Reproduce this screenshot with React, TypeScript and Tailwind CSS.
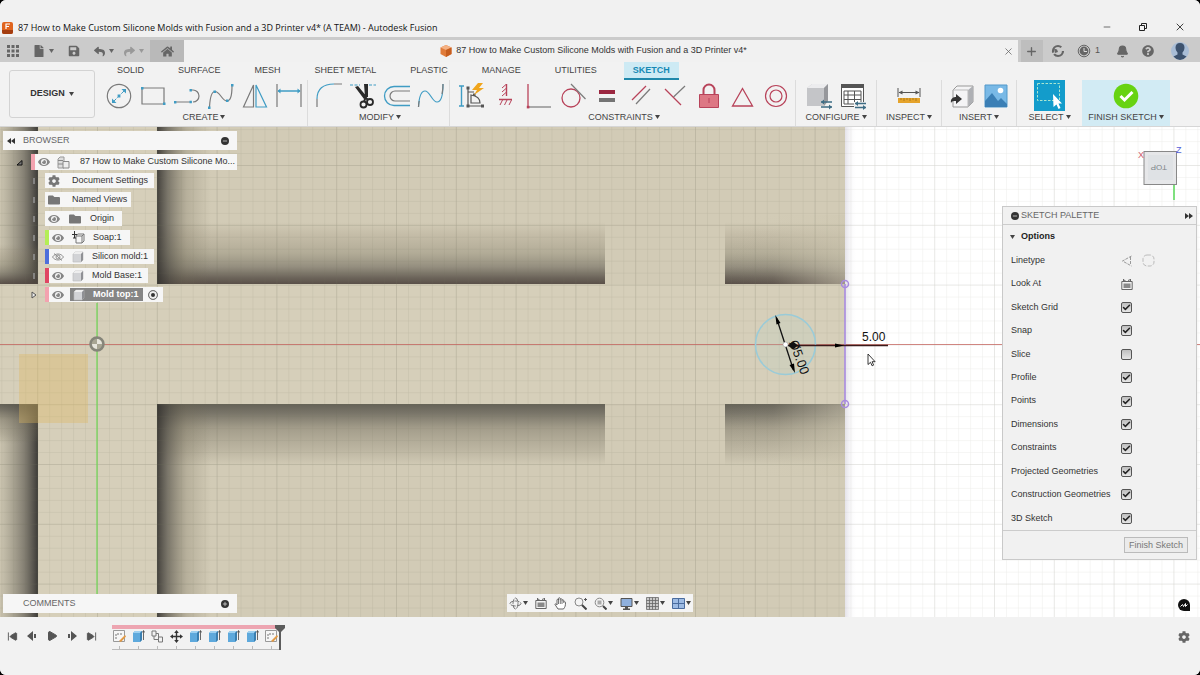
import { ReactNode } from 'react';
import { Bell, Check, Minus, Plus, Play, SkipBack, SkipForward, X } from 'lucide-react';
import { FaCog, FaFolder, FaHome, FaQuestionCircle, FaSave, FaEye, FaFile, FaReply, FaShare } from 'react-icons/fa';

const BLUE = '#3f9cc4';
const RED = '#b8435a';
const GREY = '#7a7a7a';

interface SvgProps {
  size?: number;
  children: ReactNode;
}

function Svg({ size = 28, children }: SvgProps) {
  return (
    <svg width={size} height={size} viewBox={`0 0 ${size} ${size}`} fill="none" className="flex-shrink-0" aria-hidden="true">
      {children}
    </svg>
  );
}

function Caret({ className = 'text-[#444]' }: { className?: string }) {
  return (
    <svg width="5" height="4" viewBox="0 0 5 4" className={`flex-shrink-0 ${className}`} aria-hidden="true">
      <path d="M0 0h5L2.500 4z" fill="currentColor" />
    </svg>
  );
}

/* ---------- ribbon icons ---------- */

const createIcons = [
  {
    label: 'Circle',
    icon: (
      <Svg>
        <circle cx="14" cy="14" r="11.700" stroke={GREY} strokeWidth="1.200" />
        <path d="M8.500 19.500 19.500 8.500" stroke={BLUE} strokeDasharray="4 1.500" />
        <path d="M7 21v-4.500l4.500 4.500zM21 7v4.500L16.500 7zM12.600 12.600h2.800v2.800h-2.800z" fill={BLUE} />
      </Svg>
    ),
  },
  {
    label: 'Rectangle',
    icon: (
      <Svg>
        <path d="M3 6h22v16H3z" stroke={GREY} strokeWidth="1.200" />
        <path d="M2 5h2.500v2.500H2zM24 20.500h2.500V23H24z" fill={BLUE} />
      </Svg>
    ),
  },
  {
    label: 'Line',
    icon: (
      <Svg>
        <path d="M2 20h16M18 8h2a6 6 0 0 1 0 12" stroke={GREY} strokeWidth="1.200" />
        <path d="M1 19h2.400v2.400H1zM16.500 18.800h2.400v2.400h-2.400zM16.500 7h2.400v2.400h-2.400z" fill={BLUE} />
      </Svg>
    ),
  },
  {
    label: 'Spline',
    icon: (
      <Svg>
        <path d="M2.500 25C3 16 4 9.500 8 9.500c5 0 7 9.500 12 9.500 4 0 5-7 5-15" stroke={GREY} strokeWidth="1.200" />
        <path d="M1 24.500h2.500V27H1zM6.500 8.500H9V11H6.500zM19 17.500h2.500V20H19zM24 2h2.500v2.500H24z" fill={BLUE} />
      </Svg>
    ),
  },
  {
    label: 'Mirror',
    icon: (
      <Svg>
        <path d="M12.500 3v22H2.500z" stroke={GREY} strokeWidth="1.200" />
        <path d="M15 3v22h10.500z" stroke={BLUE} strokeWidth="1.200" />
      </Svg>
    ),
  },
  {
    label: 'Sketch Dimension',
    icon: (
      <Svg>
        <path d="M2 2v23M26 2v23" stroke={GREY} strokeWidth="1.200" />
        <path d="M3 9h22" stroke={BLUE} strokeWidth="1.500" />
        <path d="m2.500 9 3-2.500v5zM25.500 9l-3-2.500v5z" fill={BLUE} />
      </Svg>
    ),
  },
];

const modifyIcons = [
  {
    label: 'Fillet',
    icon: (
      <Svg>
        <path d="M2 25v-8M19 2h8" stroke={GREY} strokeWidth="1.200" />
        <path d="M2 17C2 7 8 2 19 2" stroke={BLUE} strokeWidth="1.200" />
      </Svg>
    ),
  },
  {
    label: 'Trim',
    icon: (
      <Svg>
        <path d="M1 3h10M20 3h7" stroke={BLUE} strokeDasharray="3 1.500" />
        <path d="M15 2h4v13h-3zM6 5l3-1 9 11-3 2z" fill="#2a2a2a" />
        <circle cx="14.500" cy="22.500" r="3" stroke="#2a2a2a" strokeWidth="1.800" />
        <circle cx="21" cy="20" r="3" stroke="#2a2a2a" strokeWidth="1.800" />
        <path d="m17 14-2 6M16 15l3 3" stroke="#2a2a2a" strokeWidth="2" />
      </Svg>
    ),
  },
  {
    label: 'Offset',
    icon: (
      <Svg>
        <path d="M27 4.500H11a9.500 9.500 0 0 0 0 19h16" stroke={BLUE} strokeWidth="1.300" />
        <path d="M27 9H12a5 5 0 0 0 0 10h15" stroke={GREY} strokeWidth="1.200" />
      </Svg>
    ),
  },
  {
    label: 'Curve',
    icon: (
      <Svg>
        <path d="M1.500 25C2 16 4 9 8 9c5 0 7 11 12 11 4 0 6-6 6-18" stroke={BLUE} strokeWidth="1.200" />
        <path d="M1.500 25c.1-2 .3-4 .7-6M25 12c.7-3 1-6 1-10" stroke={GREY} strokeWidth="1.200" />
      </Svg>
    ),
  },
];

const constraintIcons = [
  {
    label: 'Auto Dimension',
    icon: (
      <Svg>
        <path d="M2 4h5M2 24h5M4.500 4v20" stroke={BLUE} strokeWidth="1.400" />
        <path d="M11 6v18h15M11 10h6M14 13v8h9c0-4-2-7-9-8z" stroke="#555" strokeWidth="1.200" />
        <path d="M9.500 4.500h3v3h-3zM9.500 22.500h3v3h-3zM24 22.500h3v3h-3zM16 11.500h2.500V14H16z" fill="#555" />
        <path d="m21 1-6 7h5l-3 5 10-7h-5l4-5z" fill="#f0a51c" />
      </Svg>
    ),
  },
  {
    label: 'Horizontal/Vertical',
    icon: (
      <Svg>
        <path d="M15.500 2v12M8 17.500h13" stroke={RED} strokeWidth="1.400" />
        <path d="m11 6 4-3.500M11 10l4-3.500M11 14l4-3.500M9 23l2.500-5M13.500 23l2.500-5M18 23l2.500-5" stroke={RED} />
      </Svg>
    ),
  },
  {
    label: 'Coincident',
    icon: (
      <Svg>
        <path d="M3 2v23" stroke={RED} strokeWidth="1.300" />
        <path d="M3 25h23" stroke={GREY} strokeWidth="1.200" />
        <path d="M1.800 23.800h2.600v2.600H1.800z" fill={RED} />
      </Svg>
    ),
  },
  {
    label: 'Tangent',
    icon: (
      <Svg>
        <circle cx="12" cy="16" r="9" stroke={RED} strokeWidth="1.300" />
        <path d="m12 2 14.500 15" stroke={GREY} strokeWidth="1.200" />
      </Svg>
    ),
  },
  {
    label: 'Equal',
    icon: (
      <Svg>
        <path d="M6 8h16v4H6z" fill="#9b2740" />
        <path d="M6 16h16v4H6z" fill="#747474" />
      </Svg>
    ),
  },
  {
    label: 'Parallel',
    icon: (
      <Svg>
        <path d="M5 18 19 4" stroke={RED} strokeWidth="1.200" />
        <path d="M9 22 23 7" stroke={GREY} strokeWidth="1.200" />
      </Svg>
    ),
  },
  {
    label: 'Perpendicular',
    icon: (
      <Svg>
        <path d="m4 7 16 16" stroke={RED} strokeWidth="1.200" />
        <path d="M12.500 15 24 4" stroke={GREY} strokeWidth="1.200" />
      </Svg>
    ),
  },
  {
    label: 'Fix',
    icon: (
      <Svg>
        <path d="M8.500 12V8a5.500 5.500 0 0 1 11 0v4" stroke={RED} strokeWidth="2" />
        <path d="M4.500 12.500h19v13h-19z" fill="#dd7784" stroke={RED} />
        <path d="M14 16v5" stroke={RED} />
      </Svg>
    ),
  },
  {
    label: 'Midpoint',
    icon: (
      <Svg>
        <path d="M13.500 6.500 23.500 24h-20z" stroke={RED} strokeWidth="1.300" />
      </Svg>
    ),
  },
  {
    label: 'Concentric',
    icon: (
      <Svg>
        <circle cx="13" cy="14" r="10.500" stroke={RED} strokeWidth="1.200" />
        <circle cx="13" cy="14" r="6" stroke={RED} strokeWidth="1.200" />
      </Svg>
    ),
  },
];

const configureIcons = [
  {
    label: 'Configure',
    icon: (
      <Svg>
        <path d="m2 6 5-4h16v17l-4 5H2z" fill="#c4c5c8" />
        <path d="m2 6 5-4h16l-4 4z" fill="#ececee" />
        <path d="M19 6 23 2v17l-4 5z" fill="#96979b" />
        <path d="M16 20h11M16 25h11" stroke="#3d6c84" strokeWidth="1.500" />
        <path d="m19 17.500-3 2.500 3 2.500zM24 22.500l3 2.500-3 2.500z" fill="#3d6c84" />
      </Svg>
    ),
  },
  {
    label: 'Configuration Table',
    icon: (
      <Svg>
        <path d="M2.500 2.500h22v22h-22z" fill="#fff" stroke="#555" />
        <path d="M2 2h23v4H2z" fill="#555" />
        <path d="M5 9h17v13H5zM5 13h17M5 17.500h17M9 9v13M15.500 9v13" stroke="#555" />
        <path d="M15 20h12v7H15z" fill="#f1f1f1" />
        <path d="M16 21.500h11M16 25.500h11" stroke="#3d6c84" strokeWidth="1.300" />
        <path d="m19 19-3 2.500 3 2.500zM24 23l3 2.500-3 2.500z" fill="#3d6c84" />
      </Svg>
    ),
  },
];

const inspectIcons = [
  {
    label: 'Measure',
    icon: (
      <Svg>
        <path d="M3 6v9M25 6v9M4 10.500h20" stroke="#555" />
        <path d="m3.500 10.500 4-2v4zM24.500 10.500l-4-2v4z" fill="#555" />
        <path d="M3 16h22v5H3z" fill="#e5a32b" />
        <path d="M6 16v2M9 16v3M12 16v2M15 16v3M18 16v2M21 16v3" stroke="#9a6a10" strokeWidth=".7" />
      </Svg>
    ),
  },
];

const insertIcons = [
  {
    label: 'Insert Derive',
    icon: (
      <Svg>
        <path d="m5 8 4-4h16v16l-5 5H5z" fill="#f4f4f5" stroke="#999" />
        <path d="m20 8 5-4v16l-5 5z" fill="#aeb0b4" />
        <path d="M5 8h15v17" stroke="#bbb" />
        <path d="M3 21c-1-5 3-6 5-6v-3l6 5-6 5v-3c-3 0-4 0-5 2z" fill="#333" />
      </Svg>
    ),
  },
  {
    label: 'Insert Canvas',
    icon: (
      <Svg>
        <path d="M3 3h22v22H3z" fill="#79b9e6" stroke="#5399ca" />
        <circle cx="18.500" cy="8.500" r="2.800" fill="#fff" />
        <path d="m3 19 7-8 6 8 3-3 6 6v3H3z" fill="#3b7fb5" />
      </Svg>
    ),
  },
];

const groups = [
  { name: 'CREATE', icons: createIcons, pad: 'pl-1 pr-px' },
  { name: 'MODIFY', icons: modifyIcons, pad: 'pl-1 pr-px' },
  { name: 'CONSTRAINTS', icons: constraintIcons, pad: 'pl-1 pr-px' },
  { name: 'CONFIGURE', icons: configureIcons, pad: 'px-[6px]' },
  { name: 'INSPECT', icons: inspectIcons, pad: 'px-[9px]' },
  { name: 'INSERT', icons: insertIcons, pad: 'px-[3px]' },
];

const workspaceTabs = ['SOLID', 'SURFACE', 'MESH', 'SHEET METAL', 'PLASTIC', 'MANAGE', 'UTILITIES'];

/* ---------- header ---------- */

function TitleBar() {
  return (
    <header className="flex h-[37px] items-end justify-between bg-[#f1f1f1] pb-px pl-[2px] pr-[14px]">
      <div className="flex h-4 items-center gap-1">
        <Svg size={12}>
          <rect width="11" height="12" rx="2" fill="#e0641e" />
          <path d="M0 8h11v2a2 2 0 0 1-2 2H2a2 2 0 0 1-2-2z" fill="#a43d10" />
          <path d="M4 7V2h4M4 4.500h3" stroke="#fff" strokeWidth="1.200" />
        </Svg>
        <h1 className="whitespace-nowrap font-['Open_Sans','Noto_Sans',sans-serif] text-[9px] text-[#111]">
          87 How to Make Custom Silicone Molds with Fusion and a 3D Printer v4* (A TEAM) - Autodesk Fusion
        </h1>
      </div>
      <div className="flex h-[18px] items-center gap-[26px] text-[#222]">
        <button aria-label="Minimize"><Minus size={10} strokeWidth={1.5} /></button>
        <button aria-label="Restore">
          <Svg size={10}>
            <path d="M1.500 3.500h5v5h-5zM3.500 3V1.500h5v5H7" stroke="#222" />
          </Svg>
        </button>
        <button aria-label="Close"><X size={12} strokeWidth={1.7} /></button>
      </div>
    </header>
  );
}

function DocumentBar() {
  return (
    <div className="flex h-[25px] border-t-[3px] border-[#cbcbcb] bg-[#f1f1f1] text-[#666]">
      <div className="flex items-center bg-[#cbcbcb] pl-[7px]">
        <button aria-label="Data panel" className="mr-[14px]">
          <Svg size={12}>
            <path d="M0 0h3v3H0zM4.500 0h3v3h-3zM9 0h3v3H9zM0 4.500h3v3H0zM4.500 4.500h3v3h-3zM9 4.500h3v3H9zM0 9h3v3H0zM4.500 9h3v3h-3zM9 9h3v3H9z" fill="#666" />
          </Svg>
        </button>
        <button aria-label="File" className="mr-[14px] flex items-center gap-1"><FaFile size={12} /><Caret className="text-[#666]" /></button>
        <button aria-label="Save" className="mr-[14px]"><FaSave size={12} /></button>
        <button aria-label="Undo" className="mr-[10px] flex items-center gap-1"><FaReply size={11} /><Caret className="text-[#666]" /></button>
        <button aria-label="Redo" className="mr-[6px] flex items-center gap-1 text-[#999]"><FaShare size={11} /><Caret className="text-[#999]" /></button>
        <button aria-label="Home" className="flex h-full w-[34px] items-center justify-center bg-[#b9b9b9]"><FaHome size={13} /></button>
      </div>
      <div className="flex flex-1 items-center">
        <div className="flex flex-1 items-center justify-center gap-1">
          <Svg size={12}>
            <path d="m6 0 5.500 2.500v6.500L6 12 .5 9V2.500z" fill="#e07b39" />
            <path d="m6 0 5.500 2.500L6 5 .5 2.500z" fill="#f4b183" />
            <path d="M6 5v7l5.500-3V2.500z" fill="#c65d1e" />
          </Svg>
          <span className="whitespace-nowrap text-[9px] text-[#333]">
            87 How to Make Custom Silicone Molds with Fusion and a 3D Printer v4*
          </span>
        </div>
        <button aria-label="Close document" className="mr-1"><X size={11} strokeWidth={1.7} /></button>
      </div>
      <div className="flex items-center bg-[#cbcbcb] pl-[3px] pr-[11px]">
        <button aria-label="New document" className="mr-2 flex h-full w-[22px] items-center justify-center bg-[#bebebe]"><Plus size={13} strokeWidth={2.5} /></button>
        <button aria-label="Extensions" className="mr-3">
          <Svg size={14}>
            <circle cx="7" cy="7" r="5" stroke="#666" strokeWidth="2.200" strokeDasharray="12 1.500 13 5" />
            <path d="M3 4.500 6 5.500 7 8l-3 1z" fill="#666" />
          </Svg>
        </button>
        <button aria-label="Job status" className="mr-4 flex items-center gap-1 text-[9px] text-[#555]">
          <Svg size={14}>
            <circle cx="7" cy="7" r="5.800" stroke="#666" />
            <circle cx="7" cy="7" r="4.400" fill="#666" />
            <path d="M7 4v3.500h3" stroke="#ddd" />
          </Svg>
          1
        </button>
        <button aria-label="Notifications" className="mr-[13px]"><Bell size={13} fill="#666" /></button>
        <button aria-label="Help" className="mr-[17px]"><FaQuestionCircle size={12} /></button>
        <button aria-label="Account">
          <Svg size={18}>
            <circle cx="9" cy="9" r="9" fill="#a9bdd6" />
            <path d="M9 1c3 0 4.500 2 4.500 4.500 0 2-1 4-2 5v2l4 2A9 9 0 0 1 9 18a9 9 0 0 1-6.500-3.500l4-2v-2c-1-1-2-3-2-5C4.500 3 6 1 9 1z" fill="#3d526e" />
          </Svg>
        </button>
      </div>
    </div>
  );
}

function GroupLabel({ children }: { children: ReactNode }) {
  return (
    <button className="flex h-[12px] items-center gap-[2px] whitespace-nowrap text-[9px] leading-[12px] text-[#444]">
      {children}
      <Caret />
    </button>
  );
}

function Ribbon() {
  return (
    <div className="flex h-[65px] border-b border-[#d6d6d6] bg-[#f2f2f2]">
      <button className="ml-[9px] mr-[3px] mt-2 flex h-12 w-[86px] items-center justify-center gap-1 rounded-[3px] border border-[#d3d3d3] text-[9px] font-bold text-[#333]">
        DESIGN <Caret />
      </button>
      <div className="flex flex-1 flex-col">
        <nav className="flex h-[18px] items-stretch pl-[2px] text-[9px] text-[#444]">
          {workspaceTabs.map((tab) => (
            <button key={tab} className="whitespace-nowrap px-[17px]">{tab}</button>
          ))}
          <button className="ml-[10px] border-b-2 border-[#2088ab] bg-[#cdeaf4] px-[9px] pt-[2px] font-bold text-[#1689b5]">SKETCH</button>
        </nav>
        <div className="flex flex-1">
          {groups.map((group) => (
            <div key={group.name} className={`flex flex-col items-center border-r border-[#dcdcdc] ${group.pad}`}>
              <div className="flex h-[31px] items-center">
                {group.icons.map((item) => (
                  <button key={item.label} aria-label={item.label} className="flex w-[34px] justify-center">{item.icon}</button>
                ))}
              </div>
              <GroupLabel>{group.name}</GroupLabel>
            </div>
          ))}
          <div className="flex w-[65px] flex-col items-center">
            <button aria-label="Select" className="flex h-[31px] items-center">
              <Svg size={31}>
                <path d="M0 0h31v31H0z" fill="#139ccb" />
                <path d="M3.500 3.500h22v17h-22z" stroke="#a9e6d0" strokeDasharray="2.500 1.500" />
                <path d="m19 14 .5 13 3-2.500 2 4.500 2-1-2-4.500h3.500z" fill="#fff" />
              </Svg>
            </button>
            <GroupLabel>SELECT</GroupLabel>
          </div>
          <div className="flex w-[88px] flex-col items-center bg-[#d2ebf4]">
            <button aria-label="Finish Sketch" className="flex h-[31px] items-center">
              <Svg size={26}>
                <circle cx="13" cy="13" r="12.300" fill="#67d312" />
                <path d="m7.500 13 4 4 8-8" stroke="#fff" strokeWidth="3" />
              </Svg>
            </button>
            <GroupLabel>FINISH SKETCH</GroupLabel>
          </div>
        </div>
      </div>
    </div>
  );
}

/* ---------- viewport ---------- */

function SketchCanvas() {
  return (
    <svg viewBox="0 127 1200 490" preserveAspectRatio="xMinYMin slice" className="absolute inset-0 h-full w-full" aria-hidden="true">
      <defs>
        <pattern id="minor" x="97" y="344.400" width="11.960" height="11.960" patternUnits="userSpaceOnUse">
          <path d="M0 0H11.960M0 0V11.960" stroke="#6b6858" strokeOpacity=".18" fill="none" />
        </pattern>
        <pattern id="major" x="97" y="344.400" width="59.800" height="59.800" patternUnits="userSpaceOnUse">
          <path d="M0 0H59.800M0 0V59.800" stroke="#6b6858" strokeOpacity=".24" fill="none" />
        </pattern>
        <linearGradient id="up" x1="0" y1="1" x2="0" y2="0">
          <stop offset="0" stopColor="#4f453f" stopOpacity=".92" />
          <stop offset=".1" stopColor="#4f4740" stopOpacity=".78" />
          <stop offset=".28" stopColor="#575248" stopOpacity=".5" />
          <stop offset=".5" stopColor="#67624f" stopOpacity=".3" />
          <stop offset=".8" stopColor="#7f735f" stopOpacity=".16" />
          <stop offset="1" stopColor="#7f735f" stopOpacity="0" />
        </linearGradient>
        <linearGradient id="down" x1="0" y1="0" x2="0" y2="1">
          <stop offset="0" stopColor="#4c4a42" stopOpacity=".82" />
          <stop offset=".15" stopColor="#504d45" stopOpacity=".68" />
          <stop offset=".4" stopColor="#5f5a4c" stopOpacity=".4" />
          <stop offset=".75" stopColor="#6a6454" stopOpacity=".2" />
          <stop offset="1" stopColor="#6a6454" stopOpacity="0" />
        </linearGradient>
        <linearGradient id="side">
          <stop offset="0" stopColor="#33312e" stopOpacity=".9" />
          <stop offset=".2" stopColor="#45423c" stopOpacity=".62" />
          <stop offset=".55" stopColor="#6a6350" stopOpacity=".26" />
          <stop offset="1" stopColor="#6a6350" stopOpacity="0" />
        </linearGradient>
        <linearGradient id="sideLeft" x1="1" x2="0">
          <stop offset="0" stopColor="#2b2a28" stopOpacity=".9" />
          <stop offset=".35" stopColor="#4a4741" stopOpacity=".6" />
          <stop offset="1" stopColor="#6a6658" stopOpacity=".1" />
        </linearGradient>
        <linearGradient id="soft">
          <stop offset="0" stopColor="#cfc8b2" stopOpacity="0" />
          <stop offset=".4" stopColor="#cfc8b2" stopOpacity=".05" />
          <stop offset="1" stopColor="#cfc8b2" stopOpacity=".6" />
        </linearGradient>
        <linearGradient id="rim">
          <stop offset="0" stopColor="#d9d6e0" stopOpacity=".7" />
          <stop offset="1" stopColor="#fff" stopOpacity="0" />
        </linearGradient>
      </defs>

      <rect x="0" y="127" width="1200" height="490" fill="#fff" />
      <rect x="845" y="127" width="12" height="490" fill="url(#rim)" />
      <rect x="0" y="127" width="845" height="490" fill="#d6cfba" />
      <rect x="157" y="127" width="688" height="157" fill="#cac2ab" fillOpacity=".3" />
      <rect x="157" y="404" width="688" height="213" fill="#cac2ab" fillOpacity=".3" />

      {/* pocket shadows */}
      <rect x="157" y="222" width="448" height="62" fill="url(#up)" />
      <rect x="725" y="222" width="120" height="62" fill="url(#up)" />
      <rect x="725" y="215" width="120" height="69" fill="url(#soft)" />
      <rect x="157" y="404" width="448" height="62" fill="url(#down)" />
      <rect x="725" y="404" width="120" height="62" fill="url(#down)" />
      <rect x="725" y="404" width="120" height="72" fill="url(#soft)" />
      <rect x="157" y="127" width="54" height="157" fill="url(#side)" />
      <rect x="157" y="404" width="54" height="213" fill="url(#side)" />
      <rect x="0" y="127" width="38" height="157" fill="url(#sideLeft)" />
      <rect x="0" y="404" width="38" height="213" fill="url(#sideLeft)" />
      <rect x="0" y="404" width="38" height="40" fill="url(#down)" />
      <rect x="0" y="244" width="38" height="40" fill="url(#up)" />

      <rect x="0" y="127" width="845" height="490" fill="url(#minor)" />
      <rect x="0" y="127" width="845" height="490" fill="url(#major)" />
      <rect x="845" y="127" width="355" height="490" fill="url(#minor)" opacity=".7" />
      <rect x="845" y="127" width="355" height="490" fill="url(#major)" opacity=".8" />
      <rect x="19" y="354" width="69" height="69" fill="#dfb65e" fillOpacity=".36" />

      {/* axes */}
      <path d="M0 344.500H1200" stroke="#c4625c" strokeOpacity=".75" />
      <path d="M97 303V594" stroke="#6fd855" strokeWidth="1.200" />
      <circle cx="97" cy="344" r="6.500" fill="#a7a593" stroke="#85857a" strokeWidth="2.500" />
      <path d="M97 344V339a5 5 0 0 1 5 5zM97 344v5a5 5 0 0 1-5-5z" fill="#e6e5dc" />

      {/* sketch profile */}
      <circle cx="785.500" cy="344.500" r="30" fill="#b5d3c8" fillOpacity=".2" stroke="#9acbd8" strokeWidth="1.600" />
      <path d="M845 284V404" stroke="#a98be0" strokeWidth="1.600" />
      <circle cx="845" cy="284" r="3.500" stroke="#a98be0" strokeWidth="1.500" fill="none" />
      <circle cx="845" cy="404" r="3.500" stroke="#a98be0" strokeWidth="1.500" fill="none" />
      <path d="M788 345.500H888" stroke="#3a1a1a" strokeWidth="1.500" />
      <path d="m844 345.500-9-2v4z" fill="#000" />
      <path d="m776.500 318 17 52" stroke="#111" strokeWidth="1.300" />
      <path d="m775.300 315 5.200 8-4 1.500zM795 373l-5.500-8 4.500-1.500z" fill="#000" />
      <path d="m788 345.500 5-4 5 4-5 4z" fill="#111" />
      <circle cx="785.500" cy="344.500" r="2.500" fill="#fff" stroke="#999" strokeWidth=".6" />
      <text x="862" y="341" fontSize="12" fill="#111" className="font-['Liberation_Sans',sans-serif]">5.00</text>
      <text transform="translate(789 342) rotate(70)" fontSize="13" fill="#111" className="font-['Liberation_Sans',sans-serif]">Ø5.00</text>
      <path d="M868 354v10.500l2.500-2.200 1.600 3.500 1.500-.7-1.500-3.400h3z" fill="#fff" stroke="#222" strokeWidth=".9" />
    </svg>
  );
}

function Body() {
  return (
    <Svg size={12}>
      <path d="m1 3 2-2h8v8l-2 2H1z" fill="#d2d3d6" stroke="#bbb" strokeWidth=".6" />
      <path d="m1 3 2-2h8L9 3z" fill="#eee" />
      <path d="M9 3l2-2v8l-2 2z" fill="#8f9094" />
    </Svg>
  );
}

function HiddenEye() {
  return (
    <Svg size={12}>
      <path d="M.5 6C3 2 9 2 11.500 6 9 10 3 10 .5 6zM2 2.500l8 7" stroke="#888" strokeWidth=".9" />
      <circle cx="6" cy="6" r="2" stroke="#888" strokeWidth=".9" />
    </Svg>
  );
}

const eye = <FaEye size={12} className="flex-shrink-0 text-[#858585]" />;

const treeRows = [
  { label: 'Document Settings', bar: '', icons: <FaCog size={12} />, pad: 'gap-3 pl-[3px] pr-[6px]' },
  { label: 'Named Views', bar: '', icons: <FaFolder size={12} />, pad: 'gap-3 pl-[3px] pr-1' },
  { label: 'Origin', bar: '', icons: <>{eye}<FaFolder size={12} /></>, pad: 'gap-[9px] pl-[3px] pr-2' },
  {
    label: 'Soap:1',
    bar: 'bg-[#b4ee55]',
    icons: (
      <>
        {eye}
        <Svg size={13}>
          <path d="M4 4.500 6 3h6v7l-2 2H4zM4 5h6v7M10 5l2-2" stroke="#777" />
          <path d="M2.500 0v7M0 3.500h5M1 7h3" stroke="#333" />
        </Svg>
      </>
    ),
    pad: 'gap-2 pl-[3px] pr-2',
  },
  { label: 'Silicon mold:1', bar: 'bg-[#4d6fdc]', icons: <><HiddenEye /><Body /></>, pad: 'gap-2 pl-[3px] pr-[6px]' },
  { label: 'Mold Base:1', bar: 'bg-[#e04563]', icons: <>{eye}<Body /></>, pad: 'gap-2 pl-[3px] pr-[6px]' },
];

function BrowserPanel() {
  return (
    <aside className="absolute left-[3px] top-1 w-[234px] text-[9px] text-[#333]">
      <div className="flex h-[19px] items-center bg-[#f6f6f6] pl-1 pr-2 text-[#666]">
        <svg width="8" height="6" viewBox="0 0 8 6" aria-hidden="true"><path d="M4 0v6L0 3zM8 0v6L4 3z" fill="#333" /></svg>
        <h2 className="ml-2 flex-1">BROWSER</h2>
        <button aria-label="Collapse browser" className="flex h-2 w-2 items-center justify-center rounded-full bg-[#333] text-[#ddd]"><Minus size={6} strokeWidth={3} /></button>
      </div>
      <div className="mt-1 flex items-center">
        <svg width="28" height="7" viewBox="0 0 28 7" aria-hidden="true"><path d="M19 1.500v4.500h-5z" fill="#777" stroke="#111" /></svg>
        <div className="flex h-4 flex-1 items-center whitespace-nowrap border-l-4 border-[#f3a2af] bg-[#f6f6f6]">
          <span className="ml-[3px]">{eye}</span>
          <span className="ml-[7px]">
            <Svg size={13}>
              <path d="M1 3 3 1h4v11H1z" fill="#ddd" stroke="#999" />
              <path d="M6 5.500h6v6.500H6zM1 4.500h5M1 8h5" fill="#eee" stroke="#888" />
            </Svg>
          </span>
          <span className="ml-[10px]">87 How to Make Custom Silicone Mo...</span>
        </div>
      </div>
      <ul className="mt-[3px] flex flex-col gap-1">
        {treeRows.map((row) => (
          <li key={row.label} className="flex items-center gap-[10px] pl-[30px]">
            <span className="h-[6px] w-[2px] bg-[#999]/70" />
            <div className="flex h-[15px] bg-[#f6f6f6]">
              {row.bar && <span className={`w-1 ${row.bar}`} />}
              <div className={`flex items-center whitespace-nowrap text-[#777] ${row.pad}`}>
                {row.icons}
                <span className="text-[#333]">{row.label}</span>
              </div>
            </div>
          </li>
        ))}
        <li className="flex items-center gap-2 pl-[28px]">
          <svg width="6" height="8" viewBox="0 0 6 8" aria-hidden="true"><path d="M1 1v6l4-3z" fill="#eee" stroke="#555" /></svg>
          <div className="flex h-[15px] items-center bg-[#f6f6f6] pr-[5px]">
            <span className="mr-[3px] h-full w-1 bg-[#f3a2af]" />
            {eye}
            <span className="ml-[6px] mr-[5px] flex h-[13px] items-center gap-2 whitespace-nowrap bg-[#858585] pl-[3px] pr-1 font-bold text-white">
              <Body /> Mold top:1
            </span>
            <input type="radio" defaultChecked aria-label="Activate Mold top:1" className="h-[10px] w-[10px] appearance-none rounded-full border border-[#777] bg-[#e8e8e8] checked:bg-[#333] checked:shadow-[inset_0_0_0_2px_#eee]" />
          </div>
        </li>
      </ul>
    </aside>
  );
}

const paletteOptions = [
  { label: 'Sketch Grid', checked: true },
  { label: 'Snap', checked: true },
  { label: 'Slice', checked: false },
  { label: 'Profile', checked: true },
  { label: 'Points', checked: true },
  { label: 'Dimensions', checked: true },
  { label: 'Constraints', checked: true },
  { label: 'Projected Geometries', checked: true },
  { label: 'Construction Geometries', checked: true },
  { label: '3D Sketch', checked: true },
];

function CalendarIcon() {
  return (
    <Svg size={12}>
      <path d="M.8 3.500h10.400v8H.8zM2.500 1v2.500M9.500 1v2.500M2.500 1.500 5 3.500M7 2.500l2.500-1" stroke="#666" />
      <path d="M2.500 5.500h7v4.500h-7z" fill="#888" />
    </Svg>
  );
}

function SketchPalette() {
  return (
    <aside className="absolute right-[3px] top-[79px] w-[195px] border border-[#c9c9c9] bg-[#f1f1f1] text-[9px] text-[#333]">
      <div className="flex h-[18px] items-center gap-[2px] border-b border-[#ccc] pl-2 pr-[3px] text-[#666]">
        <span className="flex h-2 w-2 items-center justify-center rounded-full bg-[#333] text-[#ddd]"><Minus size={6} strokeWidth={3} /></span>
        <h2 className="flex-1">SKETCH PALETTE</h2>
        <svg width="8" height="6" viewBox="0 0 8 6" aria-hidden="true"><path d="M0 0v6l4-3zM4 0v6l4-3z" fill="#333" /></svg>
      </div>
      <button className="flex h-6 items-center gap-[6px] pl-[7px] font-bold text-[#222]">
        <Caret /> Options
      </button>
      <div className="grid h-[281px] auto-rows-fr pl-2">
        <div className="flex items-center">
          <span className="w-[110px]">Linetype</span>
          <button aria-label="Construction" className="mr-[9px]">
            <Svg size={12}><path d="M10.500 1 1.500 6l9 5M9.500 2v8" stroke="#999" strokeDasharray="3 1" /></Svg>
          </button>
          <button aria-label="Centerline">
            <Svg size={13}><rect x="1" y="1" width="11" height="11" rx="4" stroke="#bbb" strokeDasharray="4 1.500" /></Svg>
          </button>
        </div>
        <div className="flex items-center">
          <span className="w-[110px]">Look At</span>
          <button aria-label="Look At"><CalendarIcon /></button>
        </div>
        {paletteOptions.map((option) => (
          <label key={option.label} className="flex items-center">
            <span className="w-[110px] whitespace-nowrap">{option.label}</span>
            <span className="relative h-[11px] w-[11px]">
              <input type="checkbox" defaultChecked={option.checked} className="peer block h-[11px] w-[11px] appearance-none rounded-[2px] border border-[#555] bg-linear-to-b from-[#bfbfbf] to-[#e6e6e6]" />
              <Check size={9} strokeWidth={4} className="pointer-events-none absolute left-px top-px text-[#222] opacity-0 peer-checked:opacity-100" />
            </span>
          </label>
        ))}
      </div>
      <div className="flex h-[29px] items-center justify-end border-t border-[#ccc] pr-2">
        <button className="h-4 whitespace-nowrap border border-[#bbb] bg-[#ebebeb] px-1 text-[9px] leading-[14px] text-[#777]">Finish Sketch</button>
      </div>
    </aside>
  );
}

function ViewCube() {
  return (
    <svg width="50" height="56" viewBox="0 0 50 56" className="absolute right-[16px] top-[17px]" aria-hidden="true">
      <path d="M40 40v22" stroke="#7fe07f" strokeWidth="2" />
      <rect x="10" y="7.500" width="32.500" height="33" fill="#e6e7e9" stroke="#888" />
      <rect x="14" y="11" width="25" height="25" fill="#dfe2e5" />
      <text transform="translate(33 20.500) rotate(180)" fontSize="8" fill="#7d8489" className="font-['Liberation_Sans',sans-serif]">TOP</text>
      <text x="4" y="14" fontSize="9" fill="#d0606c" className="font-['Liberation_Sans',sans-serif]">X</text>
      <text x="42" y="9" fontSize="9" fill="#5560d8" className="font-['Liberation_Sans',sans-serif]">Z</text>
    </svg>
  );
}

const navTools = [
  {
    label: 'Orbit',
    menu: true,
    icon: (
      <Svg size={13}>
        <ellipse cx="6.500" cy="6.500" rx="5.500" ry="2.500" stroke="#777" strokeDasharray="5 1" />
        <ellipse cx="6.500" cy="6.500" rx="2.500" ry="5.500" stroke="#777" strokeDasharray="5 1" />
      </Svg>
    ),
  },
  { label: 'Look At', menu: false, icon: <CalendarIcon /> },
  {
    label: 'Pan',
    menu: false,
    icon: (
      <Svg size={13}>
        <path d="M4 12 1 7.500c0-1 1.300-1 2 .5V3c0-1 1.500-1 1.500 0V1.500c0-1 1.700-1 1.700 0v1c0-1 1.800-1 1.800 0v1c0-1 1.700-1 1.700 0v2c.3-1 1.800-1 1.800 0C11.500 9 11 10 9.500 12z" stroke="#555" fill="#fff" strokeWidth=".9" />
        <path d="M4.500 3v4M6.300 2.500V7M8 3.500V7" stroke="#555" strokeWidth=".8" />
      </Svg>
    ),
  },
  {
    label: 'Zoom',
    menu: false,
    icon: (
      <Svg size={13}>
        <circle cx="5" cy="5" r="4" stroke="#888" />
        <path d="m8 8 4.500 4.500" stroke="#444" strokeWidth="2" />
        <path d="M10 2.500h3M11.500 1v3" stroke="#555" />
      </Svg>
    ),
  },
  {
    label: 'Fit',
    menu: true,
    icon: (
      <Svg size={13}>
        <circle cx="5.500" cy="5.500" r="4.300" stroke="#888" />
        <path d="M3.500 3.500h4v4h-4z" fill="#aaa" />
        <path d="m9 9 3.500 3.500" stroke="#444" strokeWidth="2" />
      </Svg>
    ),
  },
  {
    label: 'Display Settings',
    menu: true,
    icon: (
      <Svg size={13}>
        <path d="M1 1.500h11v8H1z" fill="#8fb0dd" stroke="#555" />
        <path d="M5 10h3v1.500h2V13H3v-1.500h2z" fill="#555" />
      </Svg>
    ),
  },
  {
    label: 'Grid and Snaps',
    menu: true,
    icon: (
      <Svg size={13}>
        <path d="M1 1h11v11H1z" fill="#c9c9c9" />
        <path d="M.5.500h12v12H.5zM.5 3.500h12M.5 6.500h12M.5 9.500h12M3.500.500v12M6.500.500v12M9.500.500v12" stroke="#666" strokeWidth=".8" />
      </Svg>
    ),
  },
  {
    label: 'Viewports',
    menu: true,
    icon: (
      <Svg size={13}>
        <path d="M.5 1.500h12v10H.5zM6.500 1.500v10M.5 6.500h12" fill="#9dbbe4" stroke="#4a6c9e" />
      </Svg>
    ),
  },
];

function NavigationBar() {
  return (
    <div className="absolute bottom-[5px] left-1/2 flex h-[18px] -translate-x-1/2 items-center gap-[7px] bg-[#f4f4f4] px-[2px]">
      {navTools.map((tool) => (
        <button key={tool.label} aria-label={tool.label} className="flex items-center gap-px">
          {tool.icon}
          {tool.menu && <Caret />}
        </button>
      ))}
    </div>
  );
}

function CommentsPanel() {
  return (
    <div className="absolute bottom-1 left-[3px] flex h-[19px] w-[234px] items-center bg-[#f6f6f6] pl-5 pr-2 text-[9px] text-[#666]">
      <h2 className="flex-1">COMMENTS</h2>
      <button aria-label="Expand comments" className="flex h-2 w-2 items-center justify-center rounded-full bg-[#333] text-[#ddd]"><Plus size={6} strokeWidth={3} /></button>
    </div>
  );
}

/* ---------- timeline ---------- */

const sketchFeature = (
  <Svg size={13}>
    <path d="M.5.500h11v11H.5z" fill="#f6f6f6" stroke="#999" />
    <path d="M3 9V4h6" stroke="#777" strokeDasharray="2 1" />
    <path d="m6 11 6-6 1 1.500L8 12z" fill="#e29a45" />
  </Svg>
);

const extrudeFeature = (
  <Svg size={13}>
    <path d="m1 3 2-2h7v9l-2 2H1z" fill="#5ea9dc" />
    <path d="m1 3 2-2h7L8 3z" fill="#9dd0f0" />
    <path d="M8 3l2-2v9l-2 2z" fill="#3a7fb0" />
    <path d="M11.500 1v9M10.300 2.500 11.500.500l1.200 2" stroke="#444" strokeWidth=".8" />
  </Svg>
);

const linkFeature = (
  <Svg size={13}>
    <path d="M1 1h4v5H1zM7.500 7h4v5h-4z" stroke="#777" />
    <path d="M5 3.500h2.500V7M3 6v3.500h4.500" stroke="#777" />
  </Svg>
);

const moveFeature = (
  <Svg size={13}>
    <path d="M6.500 2v9M2 6.500h9" stroke="#333" strokeWidth="1.400" />
    <path d="m6.500 0 2.300 3H4.200zM6.500 13l2.300-3H4.200zM0 6.500l3-2.300v4.600zM13 6.500l-3-2.300v4.600z" fill="#333" />
  </Svg>
);

const features = [
  { label: 'Sketch1', icon: sketchFeature },
  { label: 'Extrude1', icon: extrudeFeature },
  { label: 'Component', icon: linkFeature },
  { label: 'Move1', icon: moveFeature },
  { label: 'Extrude2', icon: extrudeFeature },
  { label: 'Extrude3', icon: extrudeFeature },
  { label: 'Extrude4', icon: extrudeFeature },
  { label: 'Extrude5', icon: extrudeFeature },
  { label: 'Sketch2', icon: sketchFeature },
];

function Timeline() {
  return (
    <footer className="flex h-[58px] items-start justify-between bg-[#f2f2f2] pl-[7px] pr-[10px] pt-2">
      <div className="flex items-start">
        <div className="mr-[15px] mt-[5px] flex items-center gap-2 text-[#555]">
          <button aria-label="Go to start"><SkipBack size={11} fill="currentColor" /></button>
          <button aria-label="Step back">
            <Svg size={12}><path d="M7 1v10L1 6zM8 4h2v4H8z" fill="#555" /></Svg>
          </button>
          <button aria-label="Play"><Play size={12} fill="currentColor" /></button>
          <button aria-label="Step forward">
            <Svg size={12}><path d="M5 1v10l6-5zM2 4h2v4H2z" fill="#555" /></Svg>
          </button>
          <button aria-label="Go to end"><SkipForward size={11} fill="currentColor" /></button>
        </div>
        <div>
          <div className="h-1 bg-[#eda5b1]" />
          <div className="flex gap-[6px] border-b border-[#bbb] px-px pt-px">
            {features.map((feature) => (
              <button key={feature.label} aria-label={feature.label} className="flex flex-col items-center gap-[3px]">
                {feature.icon}
                <span className="h-[3px] w-px bg-[#bbb]" />
              </button>
            ))}
          </div>
        </div>
        <svg width="10" height="25" viewBox="0 0 10 25" className="-ml-1" aria-hidden="true">
          <path d="M0 0h10v3L6 7v18H4V7L0 3z" fill="#5c5c5c" />
        </svg>
      </div>
      <button aria-label="Timeline settings" className="mt-[6px] text-[#666]"><FaCog size={12} /></button>
    </footer>
  );
}

export default function App() {
  return (
    <div className="min-h-screen bg-black font-['Liberation_Sans',Arial,sans-serif]">
      <div className="flex min-h-screen flex-col overflow-hidden rounded-[6px] bg-[#f1f1f1]">
        <TitleBar />
        <DocumentBar />
        <Ribbon />
        <main className="relative flex-1 overflow-hidden">
          <SketchCanvas />
          <BrowserPanel />
          <ViewCube />
          <SketchPalette />
          <CommentsPanel />
          <NavigationBar />
          <button aria-label="Assistant" className="absolute bottom-[6px] right-[10px]">
            <Svg size={12}>
              <path d="M6 0a6 6 0 0 1 6 6v6H6A6 6 0 0 1 6 0z" fill="#111" />
              <path d="m2.500 7.500 2-2 1 2 2-3v3l2-2" stroke="#fff" />
            </Svg>
          </button>
        </main>
        <Timeline />
      </div>
    </div>
  );
}
